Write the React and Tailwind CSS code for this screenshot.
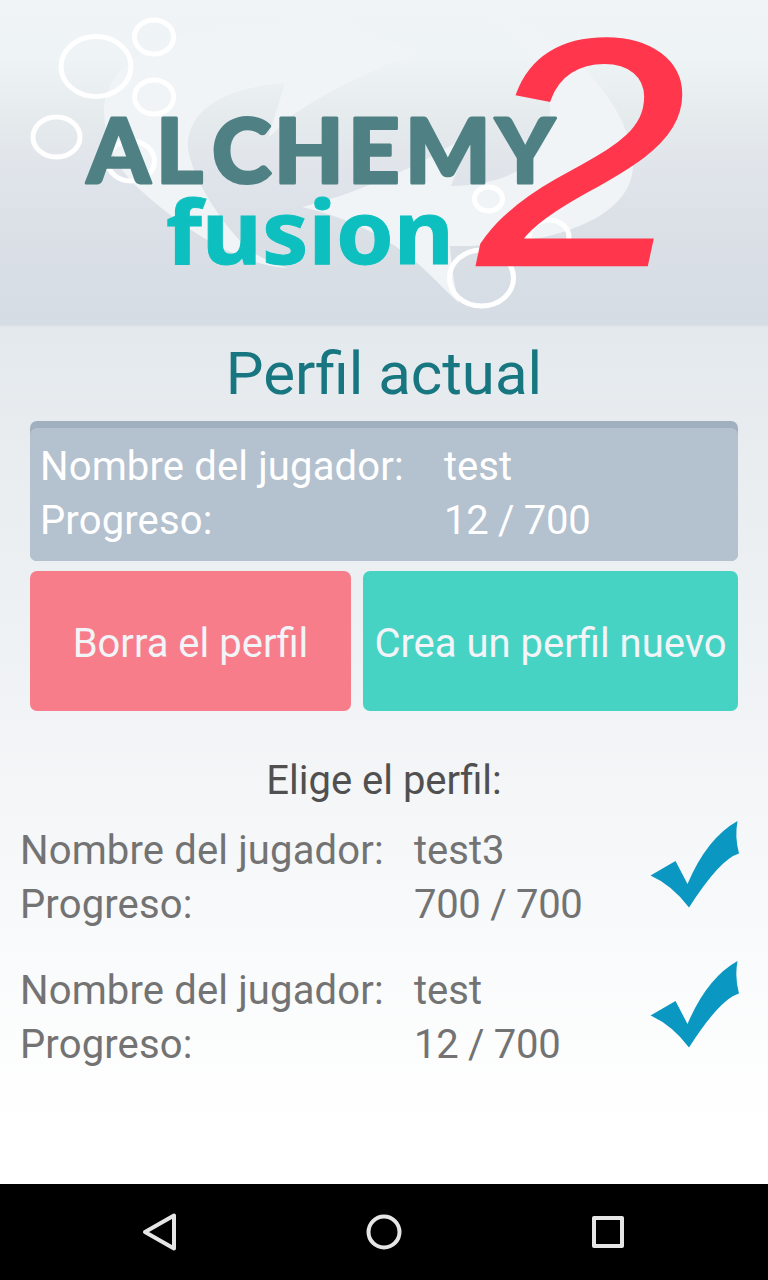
import React from 'react';

const profiles = [
  { id: 1, name: 'test3', progress: '700 / 700' },
  { id: 2, name: 'test', progress: '12 / 700' },
];

const bubbles = [
  { cx: 96, cy: 66.5, rx: 35, ry: 30 },
  { cx: 154, cy: 37, rx: 19.5, ry: 17 },
  { cx: 154, cy: 97, rx: 19.5, ry: 17 },
  { cx: 56.5, cy: 137, rx: 23.5, ry: 20 },
  { cx: 131, cy: 161, rx: 23.5, ry: 20 },
  { cx: 488.5, cy: 199, rx: 14, ry: 12 },
  { cx: 549, cy: 237, rx: 20, ry: 17 },
  { cx: 481.5, cy: 278, rx: 32, ry: 28 },
];

function Logo() {
  return (
    <svg width="768" height="325" viewBox="0 0 768 325" className="block overflow-visible">
      {/* swirling fish */}
      <g fill="#f0f4f7">
        <path d="M288 268C245 266 190 236 137 187C115 165 104 140 104 108C108 60 165 25 285 23Q283 10 278 0L310 0Q350 26 384 40L428 53L384 66Q325 92 290 117L268 138L285 83C215 89 188 115 188 145C188 170 220 225 252 252Q270 263 288 268Z" />
        <path d="M302 207Q345 196 384 179Q430 160 476 130Q462 157 451 186C510 184 550 165 550 107C550 62 510 25 464 0C560 25 633 105 633 165C633 215 560 247 450 246Q452 278 459 303C430 278 400 230 302 207Z" />
      </g>

      <g fill="none" stroke="#fff" strokeWidth="5">
        {bubbles.map((b, i) => (
          <ellipse key={i} cx={b.cx} cy={b.cy} rx={b.rx} ry={b.ry} />
        ))}
      </g>

      <text
        x="87 156 212 274 348 405 495.5"
        y="182.5"
        fontSize="90"
        fill="#4f8184"
        stroke="#4f8184"
        strokeWidth="3"
        strokeLinejoin="round"
        className="font-['Lato'] font-black"
      >
        ALCHEMY
      </text>
      <text
        x="166"
        y="264"
        fontSize="88"
        textLength="288"
        lengthAdjust="spacingAndGlyphs"
        fill="#0dc0bf"
        stroke="#0dc0bf"
        strokeWidth="1"
        className="font-['Noto_Sans'] font-bold"
      >
        fusion
      </text>
      <text
        transform="translate(480 264.5) scale(1.145 1)"
        fontSize="323"
        fill="#ff364c"
        stroke="#ff364c"
        strokeWidth="3.5"
        className="font-['Liberation_Sans'] italic"
      >
        2
      </text>
    </svg>
  );
}

function CheckIcon() {
  return (
    <svg width="92" height="90" viewBox="0 0 92 90" className="-mt-[5px] block">
      <path
        d="M1.500 56.500L26.500 42L38.500 65Q58 19 88.500 2Q85.500 18 90 34.500Q71 40 40 88.500Q23 66 1.500 56.500Z"
        fill="#0a97c1"
      />
    </svg>
  );
}

function App() {
  return (
    <div className="flex h-[1280px] w-[768px] flex-col overflow-hidden font-['Roboto',sans-serif] text-[40px] leading-[54px]">
      <div className="flex flex-1 flex-col bg-linear-to-b from-[#e4e9ed] from-27% to-white to-95%">
        <header className="h-[326px] border-b border-[#dbe0e7] bg-linear-[180deg,#f0f4f7_0%,#eef3f6_18%,#e5eaed_37%,#dfe3ea_57%,#d9dfe5_77%,#d6dce4_100%] shadow-[0_1px_1px_#dfe4e9]">
          <Logo />
        </header>

        <h1 className="mt-[10px] text-center text-[60px] leading-[76px] text-[#17767f]">
          Perfil actual
        </h1>

        <section className="mx-[30px] mt-[9px] h-[140px] overflow-hidden rounded-[7px] bg-[#a1b0be] pt-[7px]">
          <div className="grid h-full grid-cols-[404px_1fr] content-start rounded-t-[7px] bg-[#b4c1cf] pt-[12px] pl-[10px] text-white">
            <span className="tracking-[0.14px]">Nombre del jugador:</span>
            <span>test</span>
            <span className="tracking-[0.14px]">Progreso:</span>
            <span className="tracking-[-0.3px]">12 / 700</span>
          </div>
        </section>

        <div className="mx-[30px] mt-[10px] flex h-[140px] gap-3">
          <button className="w-[321px] rounded-[7px] bg-[#f87d8b] pt-1.5 text-[#f2f4f8]">
            Borra el perfil
          </button>
          <button className="flex-1 rounded-[7px] bg-[#47d3c4] pt-1.5 whitespace-nowrap text-[#f2f4f8]">
            Crea un perfil nuevo
          </button>
        </div>

        <h2 className="mt-[43px] text-center text-[#505050]">Elige el perfil:</h2>

        <ul className="mt-4 flex flex-col gap-8 pl-5 text-[#737373]">
          {profiles.map((profile) => (
            <li key={profile.id} className="flex h-[108px]">
              <div className="grid w-[629px] grid-cols-[394px_1fr]">
                <span className="tracking-[0.14px]">Nombre del jugador:</span>
                <span>{profile.name}</span>
                <span className="tracking-[0.14px]">Progreso:</span>
                <span className="tracking-[-0.3px]">{profile.progress}</span>
              </div>
              <CheckIcon />
            </li>
          ))}
        </ul>
      </div>

      <nav className="flex h-24 items-center justify-between bg-black px-[136px]">
        <svg width="48" height="48" viewBox="0 0 48 48" fill="none" stroke="#e6e6e6" strokeWidth="4" strokeLinejoin="round">
          <path d="M9 24L38 7.500V40.500Z" />
        </svg>
        <svg width="48" height="48" viewBox="0 0 48 48" fill="none" stroke="#e6e6e6" strokeWidth="4">
          <circle cx="24" cy="24" r="15.500" />
        </svg>
        <svg width="48" height="48" viewBox="0 0 48 48" fill="none" stroke="#e6e6e6" strokeWidth="4" strokeLinejoin="round">
          <rect x="10" y="10" width="28" height="28" />
        </svg>
      </nav>
    </div>
  );
}

export default App;
